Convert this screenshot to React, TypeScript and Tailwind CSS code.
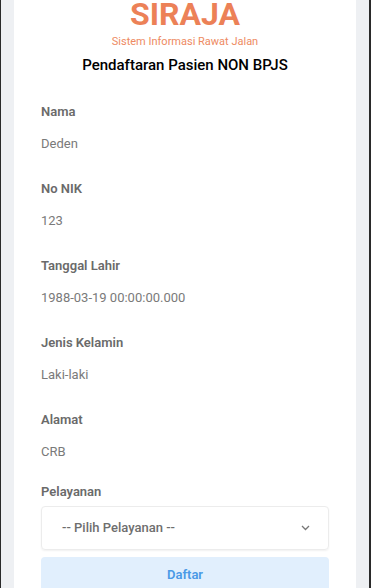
import React from 'react';

const fields = [
  { label: 'Nama', value: 'Deden' },
  { label: 'No NIK', value: '123' },
  { label: 'Tanggal Lahir', value: '1988-03-19 00:00:00.000' },
  { label: 'Jenis Kelamin', value: 'Laki-laki' },
  { label: 'Alamat', value: 'CRB' },
];

export default function App() {
  return (
    <div
      className="h-[588px] overflow-hidden bg-[#eef0f3] border-l border-r-2 border-[#2a2a2a] px-[13px]"
      style={{ fontFamily: 'Roboto, "Liberation Sans", sans-serif' }}
    >
      <div className="bg-white h-full px-[27px]">
        {/* Header */}
        <div className="flex flex-col items-center">
          <h1 className="text-[32px] leading-[32px] -mt-[2px] font-bold text-[#ec8157]">SIRAJA</h1>
          <p className="mt-[4px] text-[11px] leading-4 text-[#ee8a62]">Sistem Informasi Rawat Jalan</p>
          <h2 className="mt-[5px] text-[15px] leading-5 font-medium text-black">Pendaftaran Pasien NON BPJS</h2>
        </div>

        {/* Fields */}
        <div className="mt-[27px] flex flex-col gap-[25px]">
          {fields.map((f) => (
            <div key={f.label}>
              <div className="text-[13px] leading-5 font-semibold text-[#6a6a6a]">{f.label}</div>
              <div className="mt-[12px] text-[13px] leading-5 text-[#7a7a7a]">{f.value}</div>
            </div>
          ))}
        </div>

        {/* Pelayanan */}
        <div className="mt-[20px]">
          <div className="text-[13px] leading-5 font-semibold text-[#6a6a6a]">Pelayanan</div>
          <div className="mt-[4px] h-[44px] rounded border border-[#ececec] shadow-[0_1px_2px_rgba(0,0,0,0.06)] flex items-center justify-between pl-5 pr-[18px]">
            <span className="text-[13px] font-medium text-[#6e6e6e]">-- Pilih Pelayanan --</span>
            <svg width="9" height="6" viewBox="0 0 9 6" fill="none">
              <path d="M1 1l3.5 3.5L8 1" stroke="#777" strokeWidth="1.3" />
            </svg>
          </div>
          <button className="mt-[7px] w-full h-9 rounded bg-[#e1effd] text-[13px] font-semibold text-[#4a9ae6]">
            Daftar
          </button>
        </div>
      </div>
    </div>
  );
}
